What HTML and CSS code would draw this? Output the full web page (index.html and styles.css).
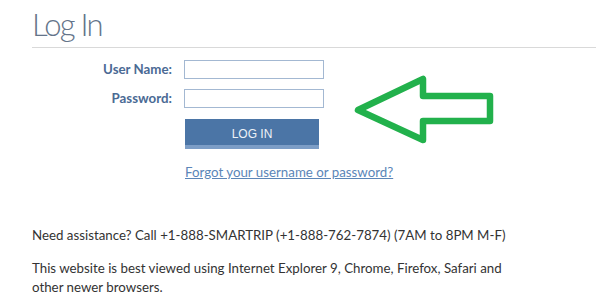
FILE: index.html
```html
<!DOCTYPE html>
<html>
<head>
<meta charset="utf-8">
<link rel="stylesheet" href="styles.css">
</head>
<body>
<div class="page">
  <h1 class="title">Log In</h1>
  <form class="login">
    <label class="label" for="user">User Name:</label>
    <input class="field" id="user" type="text">
    <label class="label" for="pass">Password:</label>
    <input class="field" id="pass" type="password">
    <button class="btn" type="button">LOG IN</button>
    <a class="forgot" href="#">Forgot your username or password?</a>
  </form>
  <div class="info">
    <p class="para first">Need assistance? Call +1-888-SMARTRIP (+1-888-762-7874) (7AM to 8PM M-F)</p>
    <p class="para">This website is best viewed using Internet Explorer 9, Chrome, Firefox, Safari and other newer browsers.</p>
  </div>
  <svg class="arrow" width="150" height="80" viewBox="350 70 150 80">
    <path d="M358 110 L423 79 L423 96 L490 96 L490 121 L423 121 L423 140 Z" fill="none" stroke="#22b14c" stroke-width="6.5" stroke-linejoin="round"/>
  </svg>
</div>
</body>
</html>
```
FILE: styles.css
```css
html, body {
  margin: 0;
  padding: 0;
  background: #ffffff;
}
body {
  font-family: Lato, "Open Sans", sans-serif;
  font-size: 13.3px;
  color: #333333;
}
.page {
  position: relative;
  padding-left: 32px;
  height: 306px;
  overflow: hidden;
}
.title {
  margin: 6px 0 0 0;
  padding-bottom: 3px;
  font-size: 31px;
  font-weight: 300;
  letter-spacing: -1.8px;
  line-height: 37.5px;
  color: #64748a;
  border-bottom: 1px solid #d9d9d9;
}
.login {
  display: grid;
  grid-template-columns: 140px 140px;
  column-gap: 12px;
  row-gap: 10px;
  align-items: center;
  margin-top: 12px;
}
.label {
  text-align: right;
  font-weight: 700;
  color: #4a6a94;
  font-size: 13.3px;
}
.field {
  box-sizing: border-box;
  width: 140px;
  height: 19px;
  margin: 0;
  padding: 0 3px;
  border: 1px solid #a3b8d2;
  border-radius: 0;
  background: #fff;
}
.btn {
  grid-column: 2;
  box-sizing: border-box;
  width: 134px;
  height: 30px;
  margin: 1px 0 0 1px;
  padding: 0;
  border: none;
  border-radius: 0;
  background: linear-gradient(to bottom, #4b75a6 0, #4b75a6 26px, #7c9dc6 26px, #7c9dc6 30px);
  color: #eef2f7;
  font-family: "Liberation Sans", Arial, sans-serif;
  font-size: 12px;
}
.forgot {
  grid-column: 2;
  margin-top: 5px;
  margin-left: 1px;
  white-space: nowrap;
  color: #5b86b8;
  font-size: 13.3px;
  line-height: 16px;
}
.info {
  margin-top: 46px;
  width: 485px;
}
.para {
  margin: 0;
  line-height: 19px;
  color: #333333;
}
.para.first {
  margin-bottom: 14px;
}
.arrow {
  position: absolute;
  left: 350px;
  top: 70px;
}
```
